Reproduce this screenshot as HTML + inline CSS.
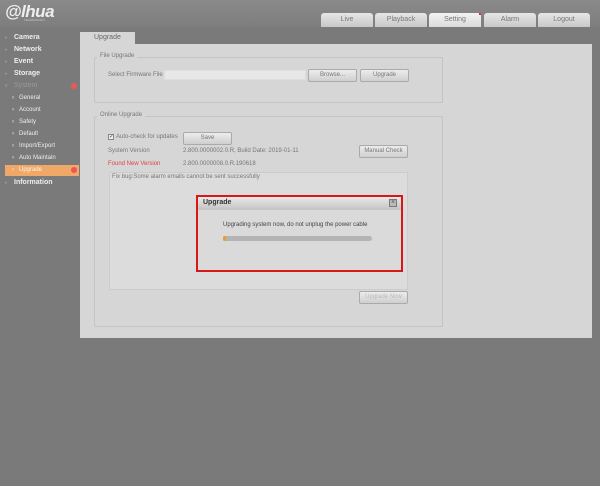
<!DOCTYPE html>
<html><head><style>
*{margin:0;padding:0;box-sizing:border-box}
body{width:600px;height:486px;background:#7a7a7a;font-family:"Liberation Sans",sans-serif;position:relative;overflow:hidden;font-size:6px;color:#555}
.a{position:absolute}
.hdr{left:0;top:0;width:600px;height:27px;background:linear-gradient(#8a8a8a,#7e7e7e)}
.tab{top:13px;height:14px;width:52px;background:linear-gradient(#e6e6e6,#c8c8c8);border-radius:3px 3px 0 0;text-align:center;line-height:14px;font-size:7px;color:#777}
.side{left:14px;font-size:7px;font-weight:bold;color:#eee}
.sub{left:19px;font-size:6px;color:#eee}
.bul{color:#999;font-size:5px;left:5px}
.btn{height:13px;background:linear-gradient(#ececec,#cfcfcf);border:1px solid #aaa;border-radius:2px;text-align:center;line-height:11px;font-size:6px;color:#777}
fieldset{}
.fs{border:1px solid #c4c4c4;border-radius:2px}
.lg{background:#d6d6d6;padding:0 3px;font-size:6px;color:#777}
</style></head><body>
<div class="a hdr"></div>
<div class="a" style="left:5px;top:2px;font-size:17px;font-weight:bold;font-style:italic;color:#eee;letter-spacing:-0.5px">@lhua</div>
<div class="a" style="left:24px;top:18px;font-size:3px;color:#ccc">TECHNOLOGY</div>
<div class="a tab" style="left:321px">Live</div>
<div class="a tab" style="left:375px">Playback</div>
<div class="a tab" style="left:429px;background:linear-gradient(#f2f2f2,#dcdcdc)">Setting</div>
<div class="a" style="left:479px;top:13px;width:2px;height:2px;background:#d33"></div>
<div class="a tab" style="left:484px">Alarm</div>
<div class="a tab" style="left:538px">Logout</div>

<div class="a side" style="top:34px">Camera</div><div class="a bul" style="top:35px">▸</div>
<div class="a side" style="top:46px">Network</div><div class="a bul" style="top:47px">▸</div>
<div class="a side" style="top:58px">Event</div><div class="a bul" style="top:59px">▸</div>
<div class="a side" style="top:70px">Storage</div><div class="a bul" style="top:71px">▸</div>
<div class="a side" style="top:82px;color:#999;font-weight:normal">System</div><div class="a bul" style="top:83px">▾</div>
<div class="a" style="left:71px;top:83px;width:6px;height:6px;border-radius:3px;background:#e55"></div>
<div class="a sub" style="top:95px">General</div><div class="a sub" style="left:12px;top:95px">›</div>
<div class="a sub" style="top:107px">Account</div><div class="a sub" style="left:12px;top:107px">›</div>
<div class="a sub" style="top:119px">Safety</div><div class="a sub" style="left:12px;top:119px">›</div>
<div class="a sub" style="top:131px">Default</div><div class="a sub" style="left:12px;top:131px">›</div>
<div class="a sub" style="top:143px">Import/Export</div><div class="a sub" style="left:12px;top:143px">›</div>
<div class="a sub" style="top:155px">Auto Maintain</div><div class="a sub" style="left:12px;top:155px">›</div>
<div class="a" style="left:5px;top:165px;width:74px;height:11px;background:#f0a868"></div>
<div class="a sub" style="top:167px;color:#fff3e0">Upgrade</div><div class="a sub" style="left:12px;top:167px">›</div>
<div class="a" style="left:71px;top:167px;width:6px;height:6px;border-radius:3px;background:#e55"></div>
<div class="a side" style="top:179px">Information</div><div class="a bul" style="top:180px">▸</div>

<div class="a" style="left:80px;top:32px;width:55px;height:13px;background:#d6d6d6;font-size:7px;color:#666;padding:2px 0 0 14px">Upgrade</div>
<div class="a" style="left:80px;top:44px;width:512px;height:294px;background:#d6d6d6"></div>

<div class="a fs" style="left:94px;top:57px;width:349px;height:46px"></div>
<div class="a lg" style="left:97px;top:53px">File Upgrade</div>
<div class="a" style="left:108px;top:72px;color:#777">Select Firmware File</div>
<div class="a" style="left:164px;top:70px;width:142px;height:10px;background:#e8e8e8;border:1px solid #ddd"></div>
<div class="a btn" style="left:308px;top:69px;width:49px">Browse...</div>
<div class="a btn" style="left:360px;top:69px;width:49px">Upgrade</div>

<div class="a fs" style="left:94px;top:116px;width:349px;height:211px"></div>
<div class="a lg" style="left:97px;top:112px">Online Upgrade</div>
<div class="a" style="left:108px;top:134px;width:6px;height:6px;border:1px solid #888;background:#eee;font-size:6px;line-height:4px">✓</div>
<div class="a" style="left:116px;top:134px;color:#777">Auto-check for updates</div>
<div class="a btn" style="left:183px;top:132px;width:49px">Save</div>
<div class="a" style="left:108px;top:148px;color:#777">System Version</div>
<div class="a" style="left:183px;top:148px;color:#777">2.800.0000002.0.R, Build Date: 2019-01-11</div>
<div class="a btn" style="left:359px;top:145px;width:49px">Manual Check</div>
<div class="a" style="left:108px;top:161px;color:#d44">Found New Version</div>
<div class="a" style="left:183px;top:161px;color:#777">2.800.0000008.0.R.190618</div>
<div class="a" style="left:109px;top:172px;width:299px;height:118px;background:#dcdcdc;border:1px solid #ccc;padding:1px 2px;color:#777">Fix bug:Some alarm emails cannot be sent successfully</div>
<div class="a btn" style="left:359px;top:291px;width:49px;color:#bbb">Upgrade Now</div>

<div class="a" style="left:196px;top:195px;width:207px;height:77px;border:2px solid #d81818;background:#dadada"></div>
<div class="a" style="left:198px;top:197px;width:203px;height:13px;background:linear-gradient(#e8e8e8,#c4c4c4);font-size:7px;font-weight:bold;color:#333;padding:2px 0 0 5px">Upgrade</div>
<div class="a" style="left:389px;top:199px;width:8px;height:8px;border:1px solid #777;background:#bbb;font-size:7px;line-height:6px;text-align:center;color:#555">×</div>
<div class="a" style="left:223px;top:222px;color:#444">Upgrading system now, do not unplug the power cable</div>
<div class="a" style="left:223px;top:236px;width:149px;height:5px;border-radius:3px;background:#b4b4b4"></div>
<div class="a" style="left:223px;top:236px;width:3px;height:5px;border-radius:2px;background:#e8a030"></div>
</body></html>
